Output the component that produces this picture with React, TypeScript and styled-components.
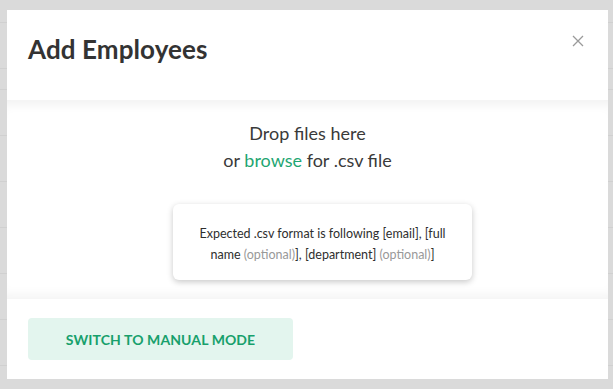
import styled, { createGlobalStyle } from "styled-components"

const GlobalStyle = createGlobalStyle`
  html, body {
    margin: 0;
    padding: 0;
    background: #dadada;
    font-family: Lato, "Open Sans", sans-serif;
    overflow: hidden;
  }
`

const Page = styled.div`
  position: relative;
  width: 613px;
  height: 389px;
  overflow: hidden;
`

const Table = styled.div`
  display: flex;
  flex-direction: column;
  padding-top: 22px;
`

const TableRow = styled.div<{ $h: number }>`
  height: ${(p) => p.$h}px;
  border-top: 1px solid #d0d0d0;
  box-sizing: border-box;
  display: flex;
  align-items: flex-end;
  padding-left: 388px;
  font-size: 14px;
  color: #8a8a8a;
`

const Overlay = styled.div`
  position: absolute;
  inset: 0;
  padding: 10px 5px 10px 7px;
`

const Modal = styled.div`
  width: 601px;
  height: 369px;
  background: #fff;
  display: flex;
  flex-direction: column;
`

const Header = styled.div`
  height: 90px;
  display: flex;
  justify-content: space-between;
  align-items: flex-start;
  padding: 23px 22px 0 21px;
  box-sizing: border-box;
`

const Title = styled.h1`
  margin: 0;
  font-size: 26px;
  font-weight: 700;
  color: #333;
  letter-spacing: 0.1px;
`

const Close = styled.button`
  border: 0;
  background: none;
  padding: 0;
  margin-top: 2px;
  width: 14px;
  height: 14px;
  cursor: pointer;
  display: flex;
`

const Body = styled.div`
  height: 199px;
  box-shadow: inset 0 12px 12px -8px rgba(0, 0, 0, 0.06),
    inset 0 -12px 12px -8px rgba(0, 0, 0, 0.05);
  display: flex;
  flex-direction: column;
  align-items: center;
  padding-top: 20px;
  box-sizing: border-box;
`

const DropText = styled.div`
  font-size: 18px;
  line-height: 27px;
  color: #3a3a3a;
  text-align: center;
`

const Browse = styled.span`
  color: #1fa672;
  cursor: pointer;
`

const Hint = styled.div`
  margin-top: 30px;
  margin-left: 30px;
  width: 299px;
  height: 76px;
  box-sizing: border-box;
  border-radius: 6px;
  background: #fff;
  box-shadow: 0 2px 6px rgba(0, 0, 0, 0.22);
  display: flex;
  align-items: center;
  justify-content: center;
  padding: 3px 20px 0;
  font-size: 12.5px;
  line-height: 21px;
  color: #2e2e2e;
  text-align: center;
`

const Optional = styled.span`
  color: #999;
`

const Footer = styled.div`
  flex: 1;
  padding: 19px 21px;
  box-sizing: border-box;
`

const SwitchButton = styled.button`
  width: 265px;
  height: 42px;
  border: 0;
  border-radius: 4px;
  background: #e3f5ee;
  color: #17a06c;
  font-family: Lato, sans-serif;
  font-size: 14px;
  font-weight: 700;
  letter-spacing: 0.1px;
  cursor: pointer;
`

const rows = [46, 21, 46, 46, 46, 46, 46, 46, 46]

export default function App() {
  return (
    <Page>
      <GlobalStyle />
      <Table>
        {rows.map((h, i) => (
          <TableRow key={i} $h={h}>
            {i === rows.length - 1 ? "Helga" : ""}
          </TableRow>
        ))}
      </Table>
      <Overlay>
        <Modal>
          <Header>
            <Title>Add Employees</Title>
            <Close aria-label="Close">
              <svg width="12" height="12" viewBox="0 0 12 12">
                <path d="M1 1 L11 11 M11 1 L1 11" stroke="#9a9a9a" strokeWidth="1.3" />
              </svg>
            </Close>
          </Header>
          <Body>
            <DropText>
              Drop files here
              <br />
              or <Browse>browse</Browse> for .csv file
            </DropText>
            <Hint>
              <div>
                Expected .csv format is following [email], [full name{" "}
                <Optional>(optional)</Optional>], [department]{" "}
                <Optional>(optional)</Optional>]
              </div>
            </Hint>
          </Body>
          <Footer>
            <SwitchButton>SWITCH TO MANUAL MODE</SwitchButton>
          </Footer>
        </Modal>
      </Overlay>
    </Page>
  )
}
